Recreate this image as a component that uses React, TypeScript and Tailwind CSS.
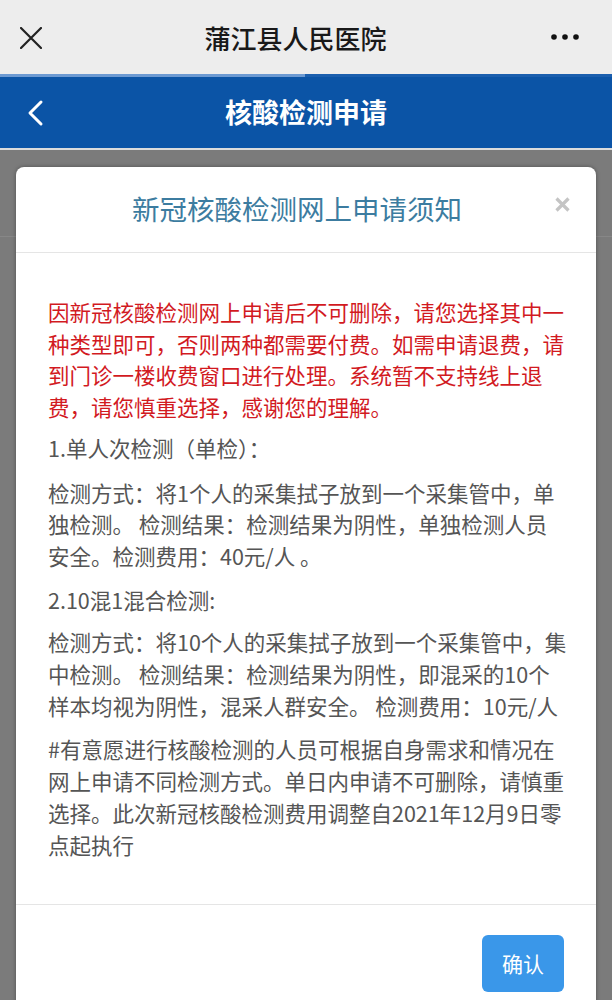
import React from "react";

const FONT = { fontFamily: '"Noto Sans CJK SC", "Noto Sans", sans-serif' };

function Line({ children }: { children: React.ReactNode }) {
  return <div className="whitespace-nowrap">{children}</div>;
}

export default function App() {
  return (
    <div
      className="w-[612px] h-[1000px] overflow-hidden flex flex-col bg-[#7b7b7b]"
      style={FONT}
    >
      {/* WeChat top bar */}
      <div className="h-[74px] shrink-0 bg-[#ededed] flex items-center justify-between px-[20px]">
        <svg width="22" height="22" viewBox="0 0 22 22" className="mt-[1px]">
          <path d="M1 1 L21 21 M21 1 L1 21" stroke="#222" strokeWidth="2.2" strokeLinecap="round" />
        </svg>
        <div className="text-[26px] font-medium text-[#191919] tracking-[0px]">蒲江县人民医院</div>
        <svg width="34" height="10" viewBox="0 0 34 10" className="mr-[9px]">
          <circle cx="5" cy="5" r="2.8" fill="#111" />
          <circle cx="16" cy="5" r="2.8" fill="#111" />
          <circle cx="27" cy="5" r="2.8" fill="#111" />
        </svg>
      </div>

      {/* progress line */}
      <div className="h-[3px] shrink-0 flex bg-[#1b5fae]">
        <div className="w-[305px] bg-[#6d9ad2]" />
      </div>

      {/* blue header */}
      <div className="h-[71px] shrink-0 bg-[#0b54a6] flex items-center relative">
        <svg width="18" height="28" viewBox="0 0 18 28" className="ml-[26px]">
          <path d="M15 3 L4 14 L15 25" stroke="#fff" strokeWidth="3" fill="none" strokeLinecap="round" strokeLinejoin="round" />
        </svg>
        <div className="flex-1 text-center text-[27px] font-bold text-white mr-[44px] pb-[1px]">核酸检测申请</div>
      </div>
      <div className="h-[2px] shrink-0 bg-[#dcdcdc]" />

      {/* overlay area */}
      <div className="relative flex-1">
        <div className="h-[87px] border-b border-[#878787]" />
        <div className="absolute left-[16px] right-[16px] top-[17px] bg-white rounded-[8px] shadow-[0_0_4px_rgba(0,0,0,0.35)]">
          {/* header */}
          <div className="h-[86px] border-b border-[#e5e5e5] flex items-center justify-center relative pr-[18px]">
            <div className="text-[27.5px] text-[#3c7ca0] pb-[1px]">新冠核酸检测网上申请须知</div>
            <svg width="15" height="15" viewBox="0 0 15 15" className="absolute right-[26px] top-[30px]">
              <path d="M1.5 1.5 L13.5 13.5 M13.5 1.5 L1.5 13.5" stroke="#c4c4c4" strokeWidth="3.2" />
            </svg>
          </div>

          {/* body */}
          <div className="pt-[43px] pb-[44px] pl-[32px] pr-[28px] text-[21.5px] leading-[31.7px] text-[#555555]">
            <div className="text-[#d21a1f] mb-[9px]">
              <Line>因新冠核酸检测网上申请后不可删除，请您选择其中一</Line>
              <Line>种类型即可，否则两种都需要付费。如需申请退费，请</Line>
              <Line>到门诊一楼收费窗口进行处理。系统暂不支持线上退</Line>
              <Line>费，请您慎重选择，感谢您的理解。</Line>
            </div>
            <div className="mb-[13px]">
              <Line>1.单人次检测（单检）：</Line>
            </div>
            <div className="mb-[12px]">
              <Line>检测方式：将1个人的采集拭子放到一个采集管中，单</Line>
              <Line>独检测。 检测结果：检测结果为阴性，单独检测人员</Line>
              <Line>安全。检测费用：40元/人 。</Line>
            </div>
            <div className="mb-[11px]">
              <Line>2.10混1混合检测:</Line>
            </div>
            <div className="mb-[12px]">
              <Line>检测方式：将10个人的采集拭子放到一个采集管中，集</Line>
              <Line>中检测。 检测结果：检测结果为阴性，即混采的10个</Line>
              <Line>样本均视为阴性，混采人群安全。 检测费用：10元/人</Line>
            </div>
            <div>
              <Line>#有意愿进行核酸检测的人员可根据自身需求和情况在</Line>
              <Line>网上申请不同检测方式。单日内申请不可删除，请慎重</Line>
              <Line>选择。此次新冠核酸检测费用调整自2021年12月9日零</Line>
              <Line>点起执行</Line>
            </div>
          </div>

          {/* footer */}
          <div className="border-t border-[#e5e5e5] pt-[30px] pb-[40px] pr-[32px] flex justify-end">
            <button className="w-[82px] h-[57px] rounded-[6px] bg-[#3a97e9] text-white text-[21px]">
              确认
            </button>
          </div>
        </div>
      </div>
    </div>
  );
}
